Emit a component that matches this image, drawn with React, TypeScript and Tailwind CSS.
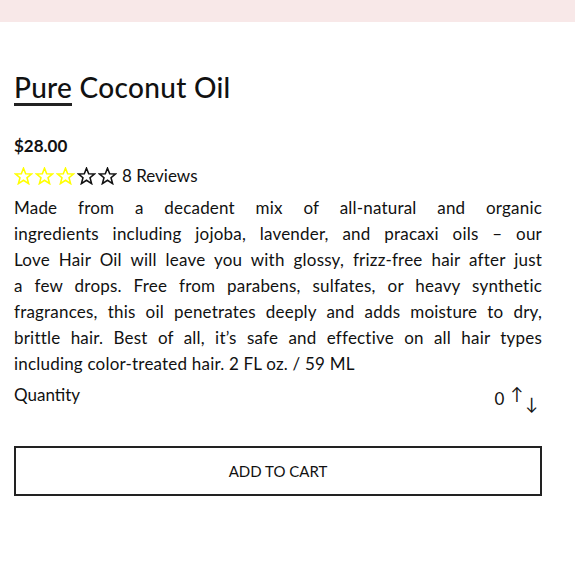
import React from "react";

const lines = [
  "Made from a decadent mix of all-natural and organic",
  "ingredients including jojoba, lavender, and pracaxi oils – our",
  "Love Hair Oil will leave you with glossy, frizz-free hair after just",
  "a few drops. Free from parabens, sulfates, or heavy synthetic",
  "fragrances, this oil penetrates deeply and adds moisture to dry,",
  "brittle hair. Best of all, it’s safe and effective on all hair types",
];

const Star: React.FC<{ color: string }> = ({ color }) => (
  <svg width="19" height="18" viewBox="0 0 24 23" fill="none" stroke={color} strokeWidth="2" strokeLinejoin="miter">
    <polygon points="12,1.5 14.8,8.6 22.4,8.9 16.5,13.7 18.5,21.2 12,17 5.5,21.2 7.5,13.7 1.6,8.9 9.2,8.6" />
  </svg>
);

const App: React.FC = () => {
  return (
    <div className="min-h-screen w-full bg-white text-[#111] font-['Lato','Open_Sans',sans-serif]">
      {/* top bar */}
      <div className="h-[22px] w-full bg-[#f8e8e8]"></div>

      <div className="w-[528px] ml-[14px] pt-[48px]">
        <h1 className="text-[28px] font-medium leading-[34px] tracking-[0.3px]">
          <span className="inline-block border-b-[3px] border-[#222] leading-[31px]">Pure</span> Coconut Oil
        </h1>

        <p className="mt-[29px] text-[17px] font-bold leading-[22px]">$28.00</p>

        <div className="mt-[7px] flex items-center h-[24px]">
          <div className="flex gap-[2px]">
            <Star color="#ffff00" />
            <Star color="#ffff00" />
            <Star color="#ffff00" />
            <Star color="#111" />
            <Star color="#111" />
          </div>
          <span className="ml-[5px] text-[17px] leading-[24px]">8 Reviews</span>
        </div>

        <div className="mt-[7px] text-[17px] leading-[26px] tracking-[0.2px]">
          {lines.map((l) => (
            <span key={l} className="block text-justify [text-align-last:justify]">
              {l}
            </span>
          ))}
          <span className="block">including color-treated hair. 2 FL oz. / 59 ML</span>
        </div>

        <div className="mt-[6px] flex items-start justify-between">
          <span className="text-[17px] leading-[24px]">Quantity</span>
          <div className="flex items-start pt-[4px] pr-[4px] text-[17px]">
            <span className="leading-[24px]">0</span>
            <span className="ml-[6px] leading-[14px]">↑</span>
            <span className="ml-[2px] mt-[10px] leading-[14px]">↓</span>
          </div>
        </div>

        <button className="mt-[35px] w-full h-[50px] border-2 border-[#222] text-[15px] uppercase text-[#111]">
          Add to cart
        </button>
      </div>
    </div>
  );
};

export default App;
